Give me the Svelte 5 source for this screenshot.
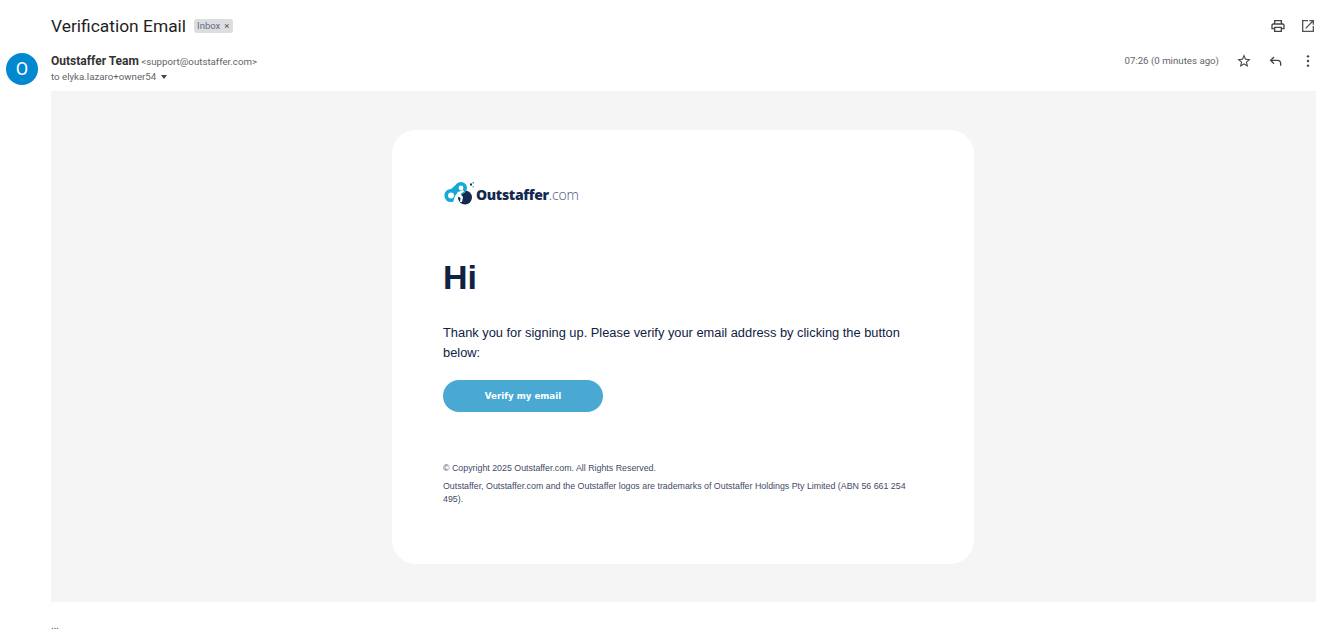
<script>
  const footer = "Outstaffer, Outstaffer.com and the Outstaffer logos are trademarks of Outstaffer Holdings Pty Limited (ABN 56 661 254 495).";
</script>

<div class="page">
  <header class="subject-row">
    <div class="subject">
      <h1>Verification Email</h1>
      <span class="label">Inbox<span class="x">×</span></span>
    </div>
    <div class="tools">
      <svg viewBox="0 0 24 24" width="16" height="16"><path fill="#444" d="M19 8h-1V3H6v5H5c-1.66 0-3 1.34-3 3v6h4v4h12v-4h4v-6c0-1.66-1.34-3-3-3zM8 5h8v3H8V5zm8 14H8v-4h8v4zm2-4v-2H6v2H4v-4c0-.55.45-1 1-1h14c.55 0 1 .45 1 1v4h-2z"/></svg>
      <svg viewBox="0 0 24 24" width="16" height="16"><path fill="#555" d="M19 19H5V5h7V3H3v18h18v-9h-2v7zM14 3v2h3.59l-9.83 9.83 1.41 1.41L19 6.41V10h2V3h-7z"/></svg>
    </div>
  </header>

  <section class="sender-row">
    <div class="avatar">O</div>
    <div class="who">
      <div class="from"><b>Outstaffer Team</b> <span>&lt;support@outstaffer.com&gt;</span></div>
      <div class="to">to elyka.lazaro+owner54 <i class="caret"></i></div>
    </div>
    <div class="meta">
      <span class="time">07:26 (0 minutes ago)</span>
      <svg viewBox="0 0 24 24" width="16" height="16"><path fill="#444" d="M22 9.24l-7.19-.62L12 2 9.19 8.63 2 9.24l5.46 4.73L5.82 21 12 17.27 18.18 21l-1.63-7.03L22 9.24zM12 15.4l-3.76 2.27 1-4.28-3.32-2.88 4.38-.38L12 6.1l1.71 4.04 4.38.38-3.32 2.88 1 4.28L12 15.4z"/></svg>
      <svg viewBox="0 0 24 24" width="16" height="16"><path fill="none" stroke="#444" stroke-width="2" d="M9 6 4 11l5 5M4 11h10c3 0 5 2 5 5v3"/></svg>
      <svg viewBox="0 0 24 24" width="16" height="16"><circle cx="12" cy="5" r="1.8" fill="#444"/><circle cx="12" cy="12" r="1.8" fill="#444"/><circle cx="12" cy="19" r="1.8" fill="#444"/></svg>
    </div>
  </section>

  <main class="canvas">
    <article class="card">
      <div class="logo">
        <svg viewBox="0 0 32 24" width="32" height="24">
          <circle cx="21" cy="16.5" r="7" fill="#14294f"/>
          <circle cx="7" cy="14.5" r="6.6" fill="#12a9d6"/>
          <circle cx="17" cy="7" r="6" fill="#12a9d6"/>
          <path fill="#12a9d6" d="M7 8 14 2l6 10-13 9z"/>
          <circle cx="7" cy="14.5" r="3" fill="#fff"/>
          <circle cx="17" cy="7" r="2.4" fill="#fff"/>
          <path fill="#fff" d="M11 15l3-4 5-2 1 1.5-3.5 2.5 2.5 3-1 5-2 0 .5-4-2-1.5-2 5.500-3.500.5z"/>
          <rect x="26" y="2.500" width="2" height="2" fill="#14294f"/><rect x="28.500" y="1" width="1.500" height="1.500" fill="#12a9d6"/><rect x="28.500" y="5" width="1.500" height="1.500" fill="#8ab8cc"/>
        </svg>
        <span class="wordmark"><b>Outstaffer</b><span class="tld">.com</span></span>
      </div>
      <h2>Hi</h2>
      <p class="body">Thank you for signing up. Please verify your email address by clicking the button below:</p>
      <div class="button">Verify my email</div>
      <p class="fine first">© Copyright 2025 Outstaffer.com. All Rights Reserved.</p>
      <p class="fine">{footer}</p>
    </article>
  </main>
  <div class="more">...</div>
</div>

<style>
  :global(body) { margin: 0; background: #fff; }
  .page { width: 1336px; height: 632px; overflow: hidden; font-family: Roboto, "Liberation Sans", sans-serif; color: #222; }
  .subject-row { height: 52px; display: flex; justify-content: space-between; align-items: flex-start; padding: 15px 20px 0 51px; box-sizing: border-box; }
  .subject { display: flex; align-items: center; gap: 8px; height: 22px; }
  h1 { margin: 0; font: 400 17.4px/22px Roboto, sans-serif; color: #1f1f1f; }
  .label { background: #ddd; border-radius: 3px; color: #5f6b8c; font-size: 9.5px; line-height: 14px; padding: 0 4px 0 3px; display: inline-flex; gap: 4px; }
  .x { color: #555; }
  .tools { display: flex; gap: 14px; padding-top: 3px; }
  .sender-row { display: flex; height: 39px; padding: 0 20px 0 6px; }
  .avatar { width: 32px; height: 32px; margin-top: 1px; border-radius: 50%; background: #0288d1; color: #fff; font-size: 18px; line-height: 32px; text-align: center; }
  .who { margin-left: 13px; flex: 1; font-size: 9.7px; color: #5f6368; }
  .from { line-height: 16px; margin-top: 1px; }
  .from b { font-size: 12px; font-weight: 700; color: #333; }
  .to { line-height: 14px; display: flex; align-items: center; gap: 5px; }
  .caret { width: 0; height: 0; border: 3.5px solid transparent; border-top: 4px solid #444; border-bottom: 0; }
  .meta { display: flex; gap: 16px; align-items: flex-start; font-size: 9.7px; color: #5f6368; }
  .time { line-height: 16px; margin-top: 1px; margin-right: 1px; }
  .meta svg { margin-top: 1px; }
  .canvas { margin: 0 20px 0 51px; height: 511px; background: #f5f5f5; padding: 39px 1px 0 0; box-sizing: border-box; }
  .card { width: 582px; height: 434px; margin: 0 auto; background: #fff; border-radius: 24px; padding: 50px 60px 0 51px; box-sizing: border-box; font-family: "Liberation Sans", Arial, sans-serif; color: #0f2244; }
  .logo { display: flex; align-items: center; height: 26px; margin-left: 1px; }
  .wordmark { font: 400 14px/20px "Open Sans", sans-serif; color: #14294f; letter-spacing: -.35px; margin: 4px 0 0 0; }
  .wordmark b { font-weight: 800; }
  .tld { color: #46557a; font-weight: 300; letter-spacing: -.1px; }
  h2 { margin: 49px 0 0; font: 700 34px/44px "Liberation Sans", sans-serif; }
  .body { margin: 24px 0 0; font-size: 12.85px; line-height: 20px; }
  .button { margin-top: 17px; width: 160px; height: 32px; border-radius: 16px; background: #4aa9d3; color: #fff; font: 700 8.7px/32px "DejaVu Sans", sans-serif; text-align: center; }
  .fine { margin: 0; font-size: 8.83px; line-height: 13px; color: #3f4a66; }
  .first { margin-top: 50px; margin-bottom: 5px; }
  .more { margin: 18px 0 0 51px; font-size: 10px; line-height: 12px; color: #444; }
</style>
